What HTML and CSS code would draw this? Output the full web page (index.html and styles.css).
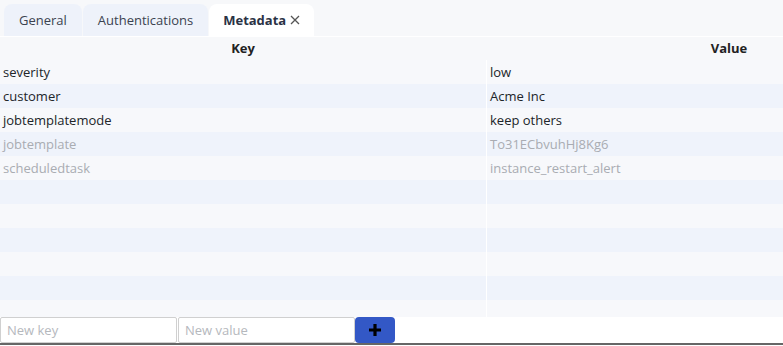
FILE: index.html
```html
<!DOCTYPE html>
<html>
<head>
<meta charset="utf-8">
<link rel="stylesheet" href="styles.css">
</head>
<body>
<div class="page">
  <div class="tabs">
    <div class="tab">General</div>
    <div class="tab">Authentications</div>
    <div class="tab active">Metadata <svg class="close" width="10" height="10" viewBox="0 0 10 10"><path d="M1 1l8 8M9 1l-8 8" stroke="#555" stroke-width="1.3" fill="none"/></svg></div>
  </div>
  <div class="table-wrap">
    <div class="grid head">
      <div class="hcell">Key</div>
      <div class="hcell">Value</div>
    </div>
    <div class="body">
      <div class="grid row"><div class="cell">severity</div><div class="cell val">low</div></div>
      <div class="grid row alt"><div class="cell">customer</div><div class="cell val">Acme Inc</div></div>
      <div class="grid row"><div class="cell">jobtemplatemode</div><div class="cell val">keep others</div></div>
      <div class="grid row alt muted"><div class="cell">jobtemplate</div><div class="cell val">To31ECbvuhHj8Kg6</div></div>
      <div class="grid row muted"><div class="cell">scheduledtask</div><div class="cell val">instance_restart_alert</div></div>
      <div class="grid row alt"><div class="cell"></div><div class="cell val"></div></div>
      <div class="grid row"><div class="cell"></div><div class="cell val"></div></div>
      <div class="grid row alt"><div class="cell"></div><div class="cell val"></div></div>
      <div class="grid row"><div class="cell"></div><div class="cell val"></div></div>
      <div class="grid row alt"><div class="cell"></div><div class="cell val"></div></div>
      <div class="grid row"><div class="cell"></div><div class="cell val"></div></div>
    </div>
  </div>
  <div class="add">
    <input class="field" type="text" placeholder="New key">
    <input class="field" type="text" placeholder="New value">
    <button class="btn" type="button" aria-label="Add">
      <svg width="16" height="16" viewBox="0 0 16 16"><path d="M8 2v12M2 8h12" stroke="#000" stroke-width="3.2" fill="none"/></svg>
    </button>
  </div>
  <div class="bottom-line"></div>
</div>
</body>
</html>
```
FILE: styles.css
```css
* { box-sizing: border-box; }
html, body { margin: 0; padding: 0; }
body {
  width: 783px;
  height: 346px;
  overflow: hidden;
  background: #fff;
  font-family: "Open Sans", "Liberation Sans", sans-serif;
  font-size: 13px;
  color: #212529;
}
.page { display: flex; flex-direction: column; height: 346px; }
.tabs {
  display: flex;
  gap: 1px;
  padding: 4px 0 0 4px;
  height: 37px;
  background: #f7f8fa;
  border-bottom: 1px solid #ffffff;
}
.tab {
  height: 32px;
  padding: 0 15px;
  display: flex;
  align-items: center;
  border-radius: 8px 8px 0 0;
  background: #eef2fa;
  color: #3b4250;
}
.tab.active {
  background: #fff;
  color: #2a3245;
  font-weight: 700;
  padding: 0 14px 0 14px;
}
.close { margin-left: 4px; }
.table-wrap { width: 783px; overflow: hidden; background: #f7f8fa; }
.grid { display: grid; grid-template-columns: 486px 486px; width: 972px; }
.head { height: 23px; }
.hcell { font-weight: 700; text-align: center; line-height: 23px; color: #222; }
.body { height: 257px; overflow: hidden; }
.row { height: 24px; background: #f7f8fb; }
.row.alt { background: #eff3fb; }
.cell { line-height: 24px; padding-left: 3px; white-space: nowrap; }
.cell.val { border-left: 1px solid #ffffff; padding-left: 3px; }
.muted { color: #a9acb2; }
.add { display: flex; height: 26px; background: #fff; }
.field {
  width: 177px;
  height: 26px;
  border: 1px solid #d0d0d0;
  border-radius: 2px;
  padding: 0 6px;
  font-family: "Open Sans", "Liberation Sans", sans-serif;
  font-size: 13px;
  margin: 0;
  background: #fff;
}
.field::placeholder { color: #b5b8bd; }
.field + .field { margin-left: 1px; }
.btn {
  width: 40px;
  height: 26px;
  margin: 0;
  border: none;
  border-radius: 4px;
  background: #3358c6;
  display: flex;
  align-items: center;
  justify-content: center;
  padding: 0;
}
.bottom-line { height: 2px; background: #666; }
```
